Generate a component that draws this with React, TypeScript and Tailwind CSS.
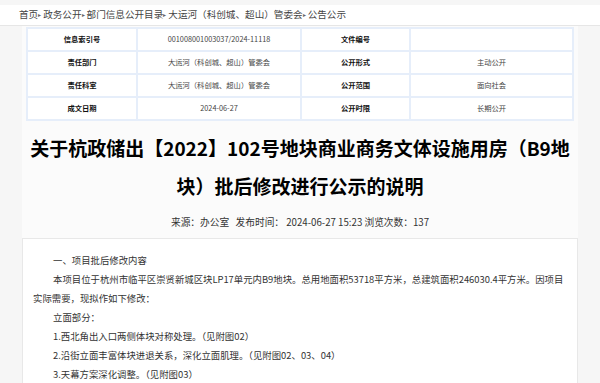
const crumbs = ["首页", "政务公开", "部门信息公开目录", "大运河（科创城、超山）管委会", "公告公示"];

const rows = [
  ["信息索引号", "001008001003037/2024-11118", "文件编号", ""],
  ["责任部门", "大运河（科创城、超山）管委会", "公开形式", "主动公开"],
  ["责任科室", "大运河（科创城、超山）管委会", "公开范围", "面向社会"],
  ["成文日期", "2024-06-27", "公开时限", "长期公开"],
];

export default function App() {
  return (
    <div
      className="h-[383px] w-[600px] overflow-hidden bg-[#f6f6f6] text-[#333]"
      style={{ fontFamily: '"Noto Sans CJK SC", "Noto Sans", sans-serif' }}
    >
      <div className="h-[5px]" />
      <div className="flex h-[21px] items-center border-b border-[#e6e6e6] bg-white pl-[19px] text-[9.6px] leading-none text-[#444]">
        {crumbs.map((c, i) => (
          <span key={c} className="flex items-center">
            {i > 0 && <span className="mr-[2px] text-[6px] text-[#666]">▸</span>}
            {c}
          </span>
        ))}
      </div>

      <div className="mx-auto w-[556px] bg-[#fbfbfb]">
        <div className="pl-[4px] pr-[6px] pt-[1px]">
          <table className="w-[546px] table-fixed border-collapse bg-white text-[7.3px]">
            <colgroup>
              <col className="w-[110px]" />
              <col className="w-[164px]" />
              <col className="w-[109px]" />
              <col className="w-[163px]" />
            </colgroup>
            <tbody>
              {rows.map((r) => (
                <tr key={r[0]} className="h-[23px]">
                  <td className="border-2 border-[#e6eefa] text-center font-bold text-[#111]">{r[0]}</td>
                  <td className="border-2 border-[#e6eefa] text-center text-[#444]">{r[1]}</td>
                  <td className="border-2 border-[#e6eefa] text-center font-bold text-[#111]">{r[2]}</td>
                  <td className="border-2 border-[#e6eefa] text-center text-[#444]">{r[3]}</td>
                </tr>
              ))}
            </tbody>
          </table>
        </div>

        <h1 className="mt-[8px] px-[8px] text-center text-[19px] font-bold leading-[38px] text-black">
          关于杭政储出【2022】102号地块商业商务文体设施用房（B9地块）批后修改进行公示的说明
        </h1>
        <div className="mt-[9px] text-center text-[9.7px] leading-[16px] text-[#333]">
          来源：办公室&nbsp;&nbsp;&nbsp;发布时间：&nbsp;2024-06-27 15:23 浏览次数：137
        </div>

        <div className="mt-[8px] h-[200px] border border-[#e8e8e8] bg-white pl-[10px] pr-[11px] pt-[12px] text-[9.4px] leading-[19px] text-[#333]">
          <p className="pl-[20px]">一、项目批后修改内容</p>
          <p className="indent-[20px]">
            本项目位于杭州市临平区崇贤新城区块LP17单元内B9地块。总用地面积53718平方米，总建筑面积246030.4平方米。因项目实际需要，现拟作如下修改：
          </p>
          <p className="pl-[20px]">立面部分：</p>
          <p className="pl-[20px]">1.西北角出入口两侧体块对称处理。（见附图02）</p>
          <p className="pl-[20px]">2.沿街立面丰富体块进退关系，深化立面肌理。（见附图02、03、04）</p>
          <p className="pl-[20px]">3.天幕方案深化调整。（见附图03）</p>
        </div>
      </div>
    </div>
  );
}
